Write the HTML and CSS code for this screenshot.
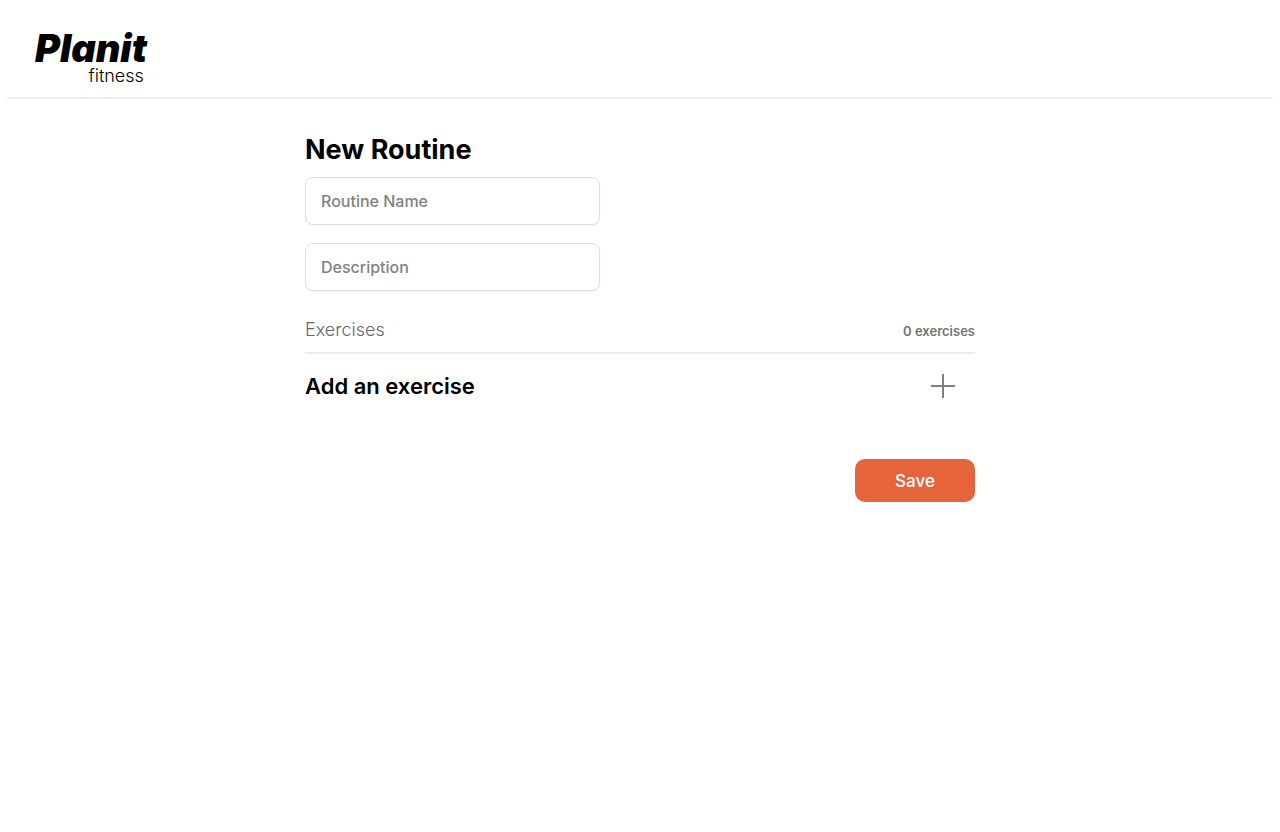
FILE: index.html
```html
<!DOCTYPE html>
<html lang="en">
<head>
<meta charset="utf-8">
<meta name="viewport" content="width=device-width, initial-scale=1">
<title>Planit Fitness – New Routine</title>
<link rel="stylesheet" href="styles.css">
</head>
<body>
<header class="site-header">
  <a class="logo" href="#">
    <span class="logo-name">Planit</span>
    <span class="logo-sub">fitness</span>
  </a>
</header>
<main class="routine">
  <form class="routine-form">
    <h1 class="title">New Routine</h1>
    <input class="field" type="text" placeholder="Routine Name" aria-label="Routine Name">
    <input class="field" type="text" placeholder="Description" aria-label="Description">
    <div class="list-head">
      <h2 class="list-title">Exercises</h2>
      <span class="count">0 exercises</span>
    </div>
    <div class="add-row">
      <h3 class="add-title">Add an exercise</h3>
      <button class="add-button" type="button" aria-label="Add an exercise">
        <svg width="24" height="24" viewBox="0 0 24 24" fill="none" stroke="currentColor" stroke-width="2"><path d="M12 0v24M0 12h24"/></svg>
      </button>
    </div>
    <button class="save" type="submit">Save</button>
  </form>
</main>
</body>
</html>
```

FILE: styles.css
```css
* {
  box-sizing: border-box;
}

body {
  margin: 0;
  background: #fff;
  color: #000;
  font-family: Inter, "Liberation Sans", sans-serif;
}

h1,
h2,
h3 {
  margin: 0;
}

.site-header {
  display: flex;
  margin: 0 7px;
  padding: 29px 28px 13px;
  border-bottom: 2px solid #eee;
}

.logo {
  display: flex;
  flex-direction: column;
  align-items: flex-end;
  color: inherit;
  text-decoration: none;
}

.logo-name {
  font-size: 38px;
  font-style: italic;
  font-weight: 900;
  line-height: 38px;
}

.logo-sub {
  padding-right: 3px;
  font-size: 18px;
  font-weight: 300;
  line-height: 17px;
}

.routine {
  max-width: 670px;
  margin: 0 auto;
  padding-top: 34px;
}

.routine-form {
  display: flex;
  flex-direction: column;
  align-items: flex-start;
}

.title {
  margin-bottom: 10px;
  font-size: 27px;
  font-weight: 700;
  line-height: 34px;
}

.field {
  width: 295px;
  height: 48px;
  margin-bottom: 18px;
  padding: 0 15px;
  border: 1px solid #e0e0e0;
  border-radius: 8px;
  background: #fff;
  box-shadow: 0 1px 2px rgba(0, 0, 0, 0.05);
  font: 500 16px/24px Inter, "Liberation Sans", sans-serif;
}

.field::placeholder {
  color: #828282;
  opacity: 1;
}

.list-head {
  display: flex;
  align-items: baseline;
  justify-content: space-between;
  align-self: stretch;
  padding: 9px 0 10px;
  border-bottom: 2px solid #eee;
}

.list-title {
  color: #666;
  font-size: 18px;
  font-weight: 300;
  line-height: 24px;
}

.count {
  color: #757575;
  font-size: 13px;
  font-weight: 600;
}

.add-row {
  display: flex;
  align-items: center;
  justify-content: space-between;
  align-self: stretch;
  padding: 18px 20px 18px 0;
}

.add-title {
  font-size: 22px;
  font-weight: 600;
  line-height: 28px;
}

.add-button {
  display: flex;
  padding: 0;
  border: 0;
  background: none;
  color: #808080;
  cursor: pointer;
}

.save {
  align-self: flex-end;
  width: 120px;
  height: 43px;
  margin-top: 41px;
  border: 0;
  border-radius: 10px;
  background: #e6643c;
  color: #fff;
  font: 500 17px/24px Inter, "Liberation Sans", sans-serif;
  cursor: pointer;
}
```
